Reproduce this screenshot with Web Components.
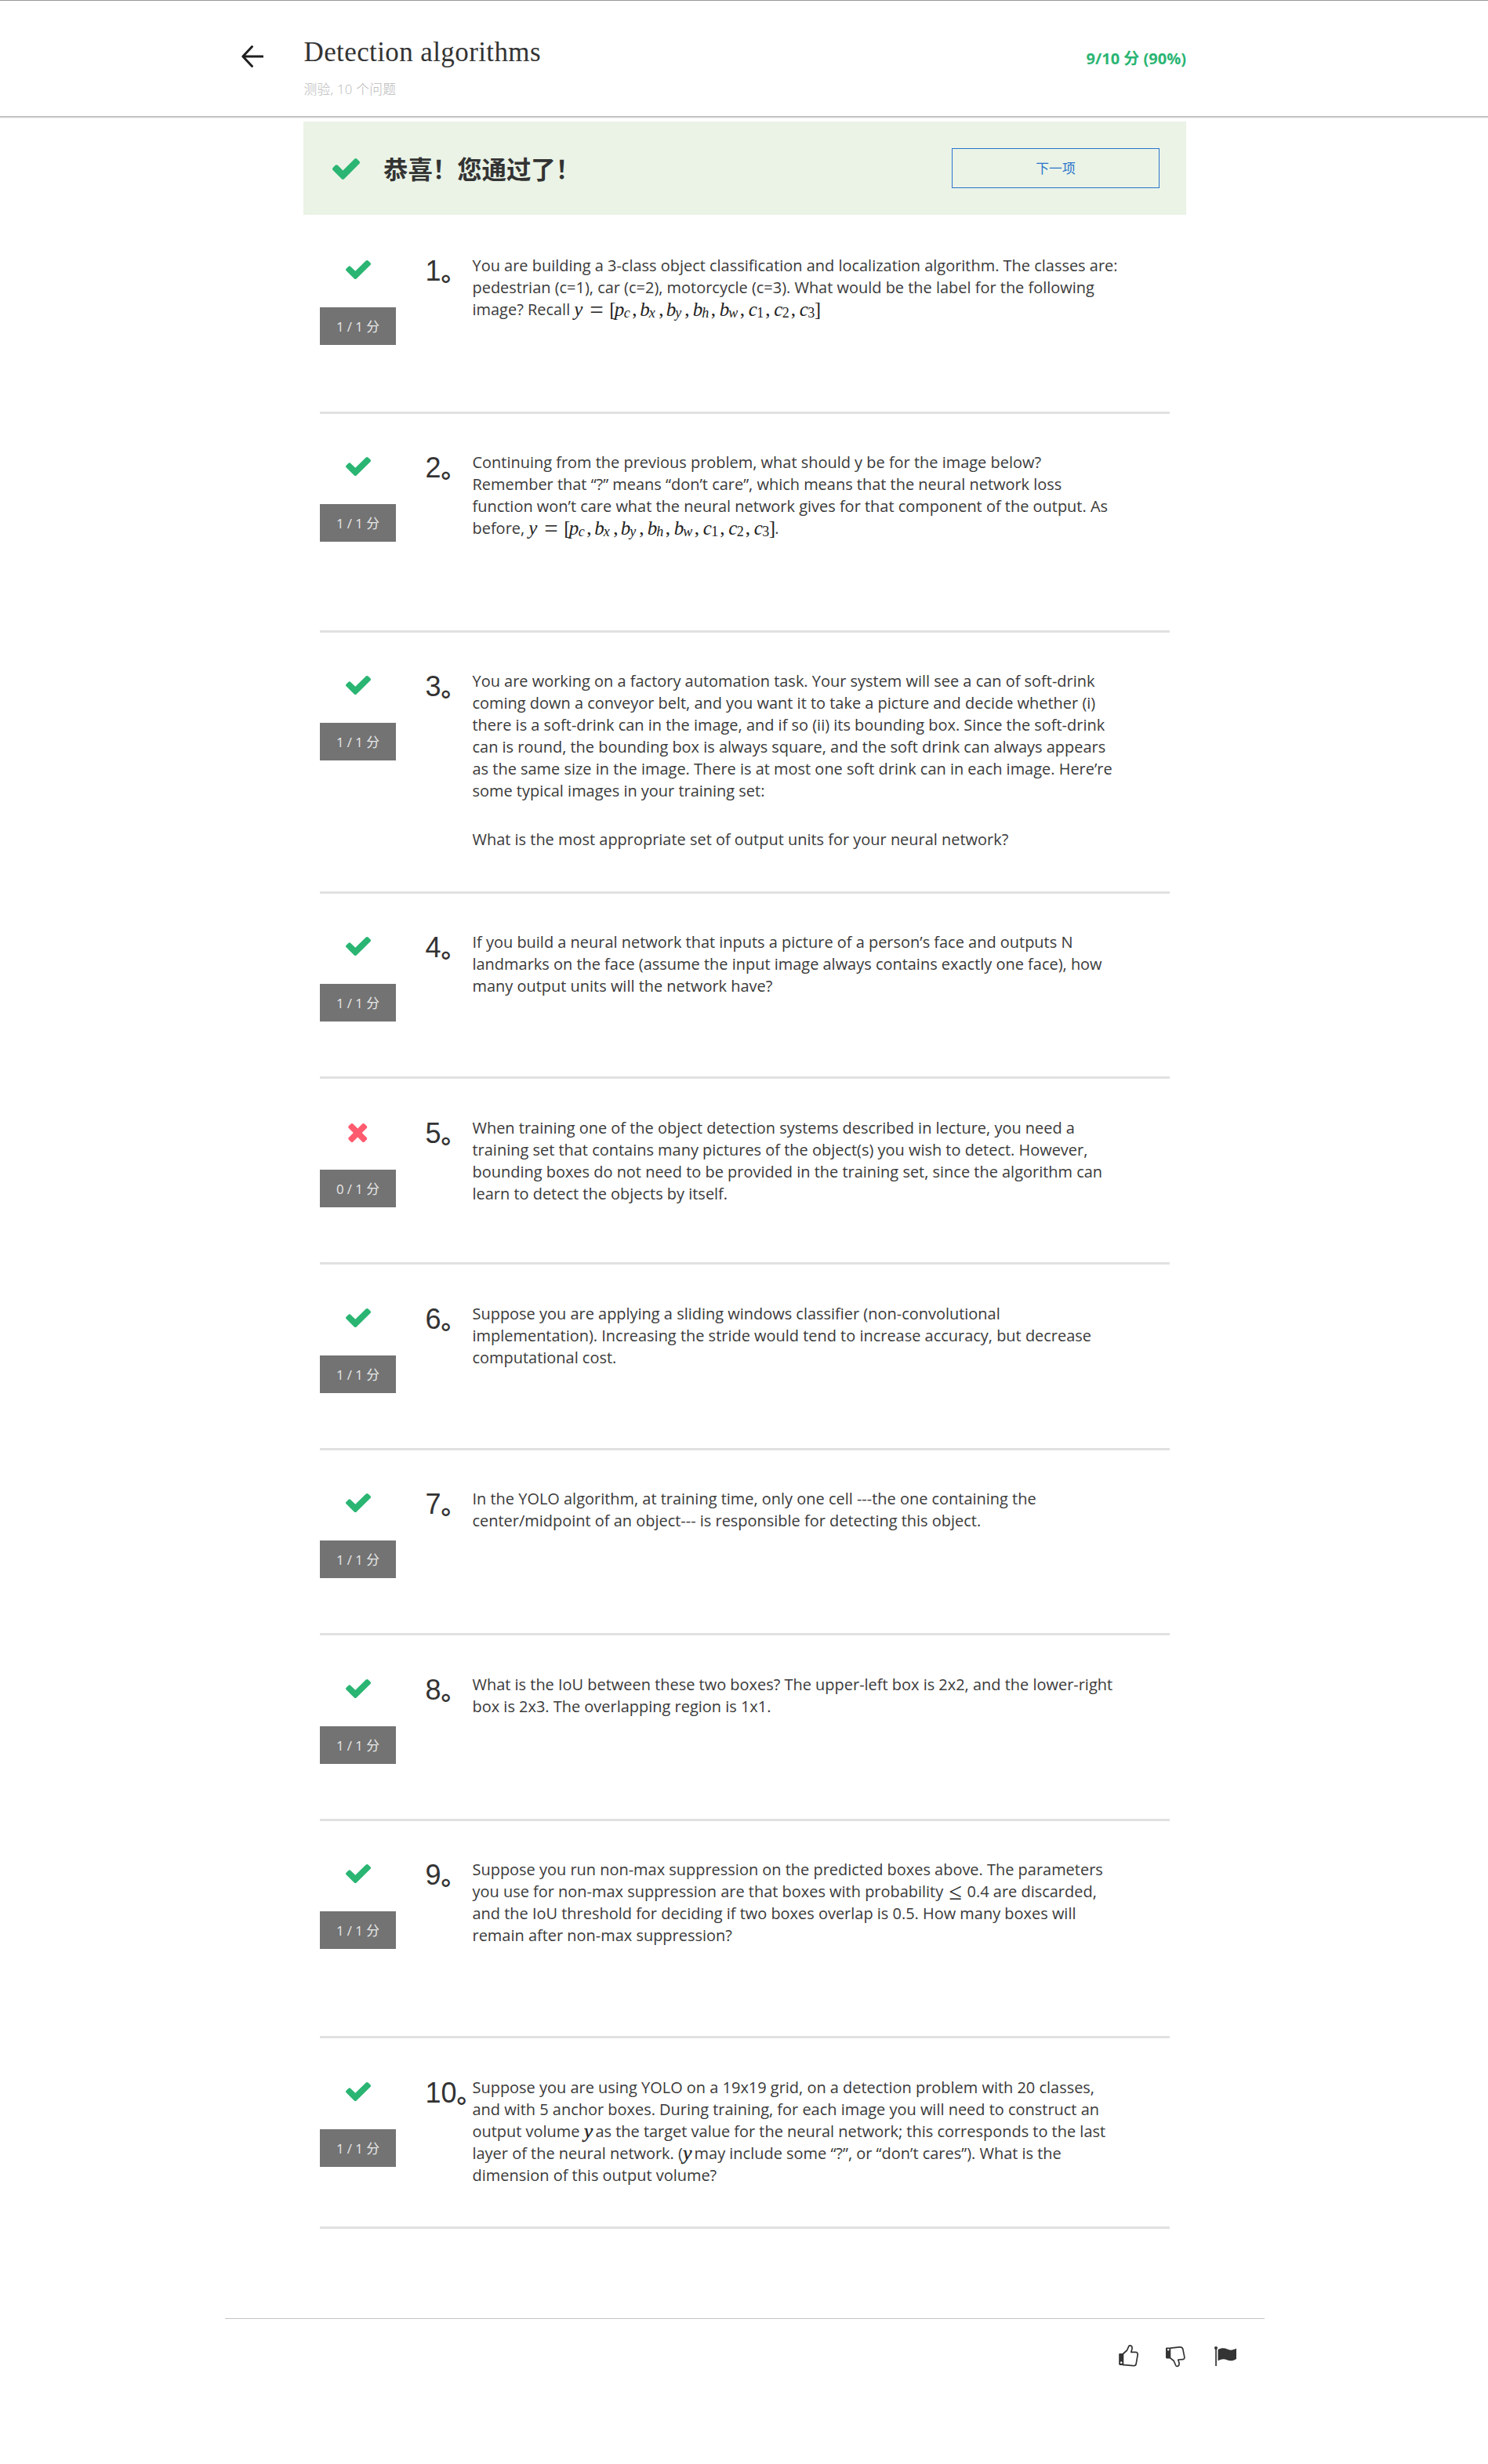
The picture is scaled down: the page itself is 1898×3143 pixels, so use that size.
<!DOCTYPE html>
<html lang="zh-CN">
<head>
<meta charset="utf-8">
<title>Detection algorithms</title>
<style>
html,body{margin:0;padding:0;background:#fff}
body{font-family:"Open Sans","Noto Sans CJK SC",sans-serif;font-size:19.97px;line-height:28px;color:#3a3a3a;width:1898px;height:3143px;overflow:hidden}
</style>
</head>
<body>
<quiz-page></quiz-page>
<script>
const make = (name, html, setup) => {
  const t = document.createElement('template');
  t.innerHTML = html;
  customElements.define(name, class extends HTMLElement {
    constructor() {
      super();
      this.attachShadow({mode: 'open'}).appendChild(t.content.cloneNode(true));
    }
    connectedCallback() { if (setup) setup(this, this.shadowRoot); }
  });
};

const CHECK = '<svg viewBox="121 334 1550 1188" preserveAspectRatio="none"><path fill="#2ab573" d="M1671 566q0 40-28 68l-724 724-136 136q-28 28-68 28t-68-28l-136-136-362-362q-28-28-28-68t28-68l136-136q28-28 68-28t68 28l294 295 656-657q28-28 68-28t68 28l136 136q28 28 28 68z"/></svg>';
const CROSS = '<svg viewBox="302 366 1188 1188"><path fill="#ff5b6e" d="M1490 1322q0 40-28 68l-136 136q-28 28-68 28t-68-28l-294-294-294 294q-28 28-68 28t-68-28l-136-136q-28-28-28-68t28-68l294-294-294-294q-28-28-28-68t28-68l136-136q28-28 68-28t68 28l294 294 294-294q28-28 68-28t68 28l136 136q28 28 28 68t-28 68l-294 294 294 294q28 28 28 68z"/></svg>';

make('status-icon', `<style>:host{display:block;width:32px;height:24px}:host([bad]){width:24.5px;padding-top:1px}div,svg{display:block;width:100%;height:100%}</style><div></div>`,
  (el, root) => { root.querySelector('div').innerHTML = el.hasAttribute('bad') ? CROSS : CHECK; });

make('quiz-header', `<style>
:host{display:flex;box-sizing:border-box;height:148px;border-top:1px solid #999;padding:0 385px 0 308px;box-shadow:0 1px 0 #bcbcbc,0 2px 0 #cfcfcf,0 3px 0 #ececec}
.back{width:28px;height:28px;margin-top:57px}
.t{margin-left:51.5px;flex:1}
h1{margin:46px 0 0;font:400 35px/40px "Liberation Serif",serif;letter-spacing:.4px;color:#333;white-space:nowrap}
.s{font-size:16.8px;line-height:24px;margin-top:15px;color:#b9b9b9;font-weight:300;letter-spacing:.25px}
.score{font-weight:700;font-size:20px;color:#2ab573;margin-top:60px}
</style>
<svg class="back" viewBox="0 0 28 28"><path d="M13.5 1.5L1.8 14l11.700 12.500M2 14h25" fill="none" stroke="#1f1f1f" stroke-width="2.900" stroke-linecap="round" stroke-linejoin="round"/></svg>
<div class="t"><h1>Detection algorithms</h1><div class="s">测验, 10 个问题</div></div>
<div class="score">9/10 分 (90%)</div>`);

make('pass-banner', `<style>
:host{display:flex;align-items:center;box-sizing:border-box;width:1126px;height:119px;margin:7px 0 0 387px;background:#eaf3e6;padding:0 34px 0 37px}
status-icon{width:35px;height:27px;margin-top:2px}
h2{flex:1;margin:0 0 0 30px;font:700 31.4px/40px "Noto Sans CJK SC",sans-serif;color:#333}
button{width:265px;height:51px;border:1px solid #2a73cc;background:none;color:#2a73cc;font:400 16.8px/24px "Open Sans","Noto Sans CJK SC",sans-serif;padding:0}
</style><status-icon></status-icon><h2>恭喜！您通过了！</h2><button>下一项</button>`);

make('quiz-question', `<style>
:host{display:flex;box-sizing:border-box;width:1084px;margin-left:408px;border-bottom:3px solid #e1e1e1}
:host([low]){padding-top:1px}
.l{width:97px;display:flex;flex-direction:column;align-items:center;padding-top:55px}
.i{height:24px}
.b{margin-top:36px;width:97px;height:48px;background:#737373;color:#e8e8e8;font-size:16.8px;line-height:49px;text-align:center}
.n{width:60px;margin-left:37.500px;padding-top:47px;font:400 36px/40px "Liberation Sans",sans-serif;color:#333;white-space:nowrap}
.n span{font-family:"Noto Sans CJK SC",sans-serif;font-weight:700;font-size:32px;font-feature-settings:"halt"}
.c{padding-top:47.500px;white-space:nowrap}
</style>
<div class="l"><div class="i"></div><div class="b"></div></div>
<div class="n"><b style="font-weight:400"></b><span>。</span></div>
<div class="c"><slot></slot></div>`, (el, root) => {
  const bad = el.hasAttribute('bad');
  el.style.height = el.getAttribute('h') + 'px';
  root.querySelector('.i').innerHTML = bad ? '<status-icon bad></status-icon>' : '<status-icon></status-icon>';
  root.querySelector('.b').textContent = (bad ? '0' : '1') + ' / 1 分';
  root.querySelector('b').textContent = el.getAttribute('n');
});

make('math-label', `<style>
:host{display:inline-flex;height:28px;vertical-align:top;font-family:"Liberation Serif",serif;font-size:25px;line-height:27px;color:#222}
i,b{display:block;flex:none;font-weight:400}
.eq{font-size:31px;line-height:29px}
sub{display:block;flex:none;font-size:18px;line-height:36px;vertical-align:baseline;font-style:italic}
sub.r{font-style:normal}
</style>`, (el, root) => {
  const parts = [['i','y',20],['e','=',25],['b','[',6.5],['i','p',12],['s','c',10.5],['b',',',10],
    ['i','b',11.5],['s','x',12.5],['b',',',9.5],['i','b',11.5],['s','y',12],['b',',',10.5],
    ['i','b',11.5],['s','h',11.5],['b',',',11],['i','b',11.5],['s','w',14.5],['b',',',11],
    ['i','c',10.5],['r','1',11],['b',',',11],['i','c',10.5],['r','2',11],['b',',',11],
    ['i','c',10.5],['r','3',8.5],['b',']',7.5]];
  for (const [k, text, w] of parts) {
    const e = document.createElement(k === 's' || k === 'r' ? 'sub' : k === 'e' ? 'b' : k);
    if (k === 'r') e.className = 'r';
    if (k === 'e') e.className = 'eq';
    e.textContent = text;
    e.style.width = w + 'px';
    root.appendChild(e);
  }
});

make('math-sign', `<style>:host{display:inline-block;height:28px;vertical-align:top;font-family:"Liberation Serif",serif;font-size:26px;line-height:27px;color:#222;width:var(--w,9.5px)}:host([it]){font-style:italic;-webkit-text-stroke:.3px #222}</style><slot></slot>`);

make('quiz-footer', `<style>
:host{display:flex;box-sizing:border-box;width:1326px;margin:114px 0 0 287px;border-top:1px solid #c4c4c4;justify-content:flex-end;padding:33px 36px 0 0;gap:34px}
svg{width:28px;height:28px;display:block;overflow:visible}
</style>
<svg style="width:26px" viewBox="0 0 26 28"><path d="M5.500 11.500L10.500 7l2.300-5.200C13.800.2 17.200.8 17.100 4c0 2-.9 3.600-1.300 5.300h5.700c1.900 0 3 1.300 2.700 3.200l-2 11.700c-.3 1.800-1.600 2.700-3.500 2.500L7.500 25.600H5" fill="none" stroke="#333" stroke-width="1.700" stroke-linejoin="round"/><path fill="#333" fill-rule="evenodd" d="M1.200 11H6.300V26H1.500Q.2 25.800.2 24.500V12Q.2 11 1.200 11zM3.200 21.300a1.300 1.300 0 1 0 .01 0z"/></svg>
<svg style="width:28px" viewBox="0 0 28 28"><path d="M6 4.200l11.500-1.400c2.500-.2 4 .7 4.400 3l1.900 9.500c.4 2-.7 3.300-2.700 3.400l-5.300.3c.4 1.700 1.300 3.200 1.300 5.200.1 3.200-3.400 4.200-4.500 1.800L10.300 20.500 5.800 16.800" fill="none" stroke="#333" stroke-width="1.700" stroke-linejoin="round"/><path fill="#333" fill-rule="evenodd" d="M1 3.500H6.300V17.500H1.300Q0 17.300 0 16V4.500Q0 3.500 1 3.500zM3.200 4.900a1.300 1.300 0 1 0 .01 0z"/></svg>
<svg viewBox="0 0 28 28"><circle cx="2" cy="4" r="2" fill="#333"/><path fill="#333" d="M1.200 3h1.700v24H1.200zM4.500 6.200C9 3.500 13 3.800 16.500 5.600 20 7.400 24 6.800 28 4.500V18C24 20.500 20 21 16 19.200 12.500 17.600 9 17.800 4.500 20.300z"/></svg>`);

make('quiz-page', `<style>:host{display:block}.list{padding-top:3px}p{margin:0 0 6px}</style>
<quiz-header></quiz-header><pass-banner></pass-banner>
<div class="list">
<quiz-question n="1" h="251">You are building a 3-class object classification and localization algorithm. The classes are:<br>pedestrian (c=1), car (c=2), motorcycle (c=3). What would be the label for the following<br>image? Recall <math-label></math-label></quiz-question>
<quiz-question n="2" h="279">Continuing from the previous problem, what should y be for the image below?<br>Remember that “?” means “don’t care”, which means that the neural network loss<br>function won’t care what the neural network gives for that component of the output. As<br>before, <math-label></math-label>.</quiz-question>
<quiz-question n="3" h="333"><p>You are working on a factory automation task. Your system will see a can of soft-drink<br>coming down a conveyor belt, and you want it to take a picture and decide whether (i)<br>there is a soft-drink can in the image, and if so (ii) its bounding box. Since the soft-drink<br>can is round, the bounding box is always square, and the soft drink can always appears<br>as the same size in the image. There is at most one soft drink can in each image. Here’re<br>some typical images in your training set:</p><p style="padding-top:28px">What is the most appropriate set of output units for your neural network?</p></quiz-question>
<quiz-question n="4" h="236">If you build a neural network that inputs a picture of a person’s face and outputs N<br>landmarks on the face (assume the input image always contains exactly one face), how<br>many output units will the network have?</quiz-question>
<quiz-question n="5" h="237" bad low>When training one of the object detection systems described in lecture, you need a<br>training set that contains many pictures of the object(s) you wish to detect. However,<br>bounding boxes do not need to be provided in the training set, since the algorithm can<br>learn to detect the objects by itself.</quiz-question>
<quiz-question n="6" h="237" low>Suppose you are applying a sliding windows classifier (non-convolutional<br>implementation). Increasing the stride would tend to increase accuracy, but decrease<br>computational cost.</quiz-question>
<quiz-question n="7" h="236">In the YOLO algorithm, at training time, only one cell ---the one containing the<br>center/midpoint of an object--- is responsible for detecting this object.</quiz-question>
<quiz-question n="8" h="237" low>What is the IoU between these two boxes? The upper-left box is 2x2, and the lower-right<br>box is 2x3. The overlapping region is 1x1.</quiz-question>
<quiz-question n="9" h="277">Suppose you run non-max suppression on the predicted boxes above. The parameters<br>you use for non-max suppression are that boxes with probability <math-sign style="--w:18px;margin-left:2px;font-size:30px">≤</math-sign> 0.4 are discarded,<br>and the IoU threshold for deciding if two boxes overlap is 0.5. How many boxes will<br>remain after non-max suppression?</quiz-question>
<quiz-question n="10" h="243" low>Suppose you are using YOLO on a 19x19 grid, on a detection problem with 20 classes,<br>and with 5 anchor boxes. During training, for each image you will need to construct an<br>output volume <math-sign it>y</math-sign> as the target value for the neural network; this corresponds to the last<br>layer of the neural network. (<math-sign it>y</math-sign> may include some “?”, or “don’t cares”). What is the<br>dimension of this output volume?</quiz-question>
</div>
<quiz-footer></quiz-footer>`);
</script>
</body>
</html>
